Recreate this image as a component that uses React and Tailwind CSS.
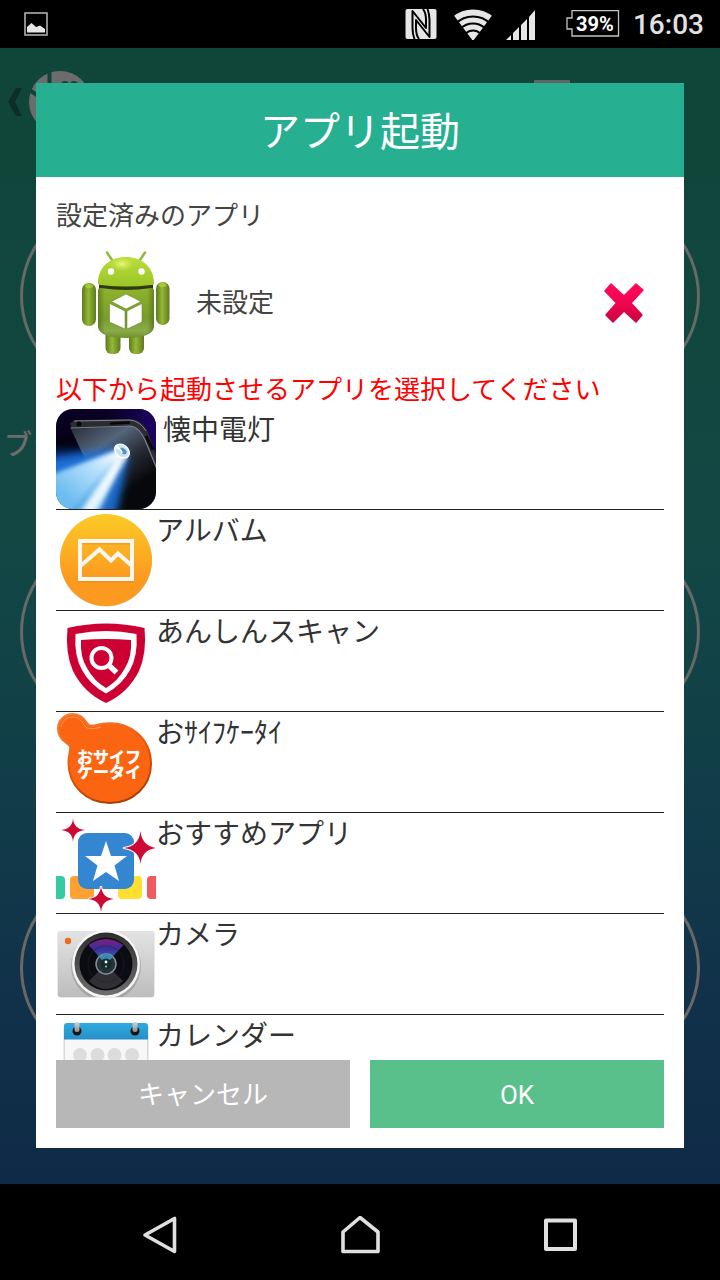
import React from "react";

function FlashlightIcon() {
  return (
    <svg viewBox="0 0 100 100" className="w-[100px] h-[100px] shrink-0">
      <defs>
        <clipPath id="flClip">
          <rect width="100" height="100" rx="17" />
        </clipPath>
        <linearGradient id="flBg" x1="0" y1="0" x2="0" y2="1">
          <stop offset="0" stopColor="#0a0124" />
          <stop offset="0.35" stopColor="#040214" />
          <stop offset="0.55" stopColor="#0b3d9c" />
          <stop offset="1" stopColor="#2a86d8" />
        </linearGradient>
        <linearGradient id="flTop" x1="0" y1="0" x2="1" y2="0">
          <stop offset="0.5" stopColor="#180060" stopOpacity="0" />
          <stop offset="1" stopColor="#1d0566" />
        </linearGradient>
        <linearGradient id="flPhone" x1="0.1" y1="0" x2="0.8" y2="1">
          <stop offset="0" stopColor="#2a313b" />
          <stop offset="0.3" stopColor="#56657a" />
          <stop offset="0.55" stopColor="#262b34" />
          <stop offset="0.8" stopColor="#07080b" />
        </linearGradient>
        <linearGradient id="flBeam" gradientUnits="userSpaceOnUse" x1="66" y1="44" x2="18" y2="96">
          <stop offset="0" stopColor="#ffffff" />
          <stop offset="0.4" stopColor="#b9e2fb" />
          <stop offset="1" stopColor="#6cbcf0" />
        </linearGradient>
        <filter id="flSoft" x="-20%" y="-20%" width="140%" height="140%">
          <feGaussianBlur stdDeviation="4" />
        </filter>
        <filter id="flSofter" x="-20%" y="-20%" width="140%" height="140%">
          <feGaussianBlur stdDeviation="2" />
        </filter>
      </defs>
      <g clipPath="url(#flClip)">
        <rect width="100" height="100" fill="url(#flBg)" />
        <rect width="100" height="40" fill="url(#flTop)" />
        <path d="M14 18 L78 15 Q86 16 90 27 L100 50 V100 H50 L28 48 Z" fill="url(#flPhone)" />
        <path d="M14 14 L20 11 L76 10 Q87 12 92 23 L102 52 V64 L88 30 Q84 19 77 17 L16 20 Z" fill="#2b2c31" />
        <path d="M15 19 L75 17 Q84 19 89 31 L101 60" fill="none" stroke="#7b8088" strokeWidth="1.200" />
        <path d="M18 12 L74 11 Q84 12 90 22" fill="none" stroke="#85868c" strokeWidth="1" />
        <path d="M55 14.500 L73 13.500" stroke="#07070a" strokeWidth="2.500" strokeLinecap="round" />
        <circle cx="23" cy="15" r="2.500" fill="#08080a" />
        <path d="M90 27 L97 41" stroke="#0a0a0d" strokeWidth="3" />
        <path d="M64 38 L-6 50 V106 H60 L72 48 Z" fill="#1c70d6" filter="url(#flSoft)" />
        <path d="M64 40 L-6 66 V106 H44 L71 47 Z" fill="url(#flBeam)" filter="url(#flSofter)" />
        <path d="M66 48 L42 104 H54 L71 49 Z" fill="#1a5fb8" opacity="0.5" filter="url(#flSofter)" />
        <path d="M66 45 L24 104 H38 L70 48 Z" fill="#ffffff" opacity="0.8" filter="url(#flSofter)" />
        <path d="M62 46 L14 104 H20 Z" fill="#4b9be0" opacity="0.6" filter="url(#flSofter)" />
        <ellipse cx="66" cy="42" rx="8" ry="6" transform="rotate(38 66 42)" fill="#c9e2f2" stroke="#ffffff" strokeWidth="1.500" />
        <ellipse cx="67" cy="42" rx="4" ry="2.500" transform="rotate(38 67 42)" fill="#5391bf" />
        <path d="M60 38 Q64 39 66 44" fill="none" stroke="#ffffff" strokeWidth="2" />
      </g>
    </svg>
  );
}

function AlbumIcon() {
  return (
    <svg viewBox="0 0 100 100" className="w-[100px] h-[100px] shrink-0">
      <defs>
        <linearGradient id="alBg" x1="0" y1="0" x2="0" y2="1">
          <stop offset="0" stopColor="#fccb27" />
          <stop offset="0.7" stopColor="#fc9a20" />
          <stop offset="1" stopColor="#fc9a20" />
        </linearGradient>
      </defs>
      <circle cx="50" cy="50.500" r="46" fill="#d9c9a8" />
      <circle cx="50" cy="50" r="46" fill="url(#alBg)" />
      <g fill="none" stroke="#d97f14" strokeOpacity="0.4" strokeWidth="4" transform="translate(0 1)">
        <rect x="24" y="31.500" width="52" height="38" />
      </g>
      <g fill="none" stroke="#fbf8f4" strokeWidth="4">
        <rect x="24" y="31" width="52" height="38" />
        <path d="M25 55.500 L43.500 39.500 L55 50.500 L62 43.500 L75 55" />
      </g>
    </svg>
  );
}

function ShieldIcon() {
  return (
    <svg viewBox="0 0 100 100" className="w-[100px] h-[100px] shrink-0">
      <path d="M11.500 17 Q50 8 88.500 17 Q91 42 83 60 Q72 82 50 92 Q28 82 17 60 Q9 42 11.500 17 Z" fill="#cc0033" />
      <path d="M19.500 23 Q50 17 80.500 23 Q82 45 74 59 Q66 74 50 82.500 Q34 74 26 59 Q18 45 19.500 23 Z" fill="#fff" />
      <path d="M25 29 Q50 27 75 29 Q76 46 69 57 Q62 70 50 77 Q38 70 31 57 Q24 46 25 29 Z" fill="#cc0033" />
      <circle cx="45.500" cy="47" r="10" fill="none" stroke="#fff" strokeWidth="4" />
      <path d="M52 53.500 L60.500 61.500" stroke="#fff" strokeWidth="5.500" />
    </svg>
  );
}

function WalletIcon() {
  return (
    <svg viewBox="0 0 100 100" className="w-[100px] h-[100px] shrink-0">
      <defs>
        <linearGradient id="waEdge" x1="0.2" y1="0" x2="0.6" y2="1">
          <stop offset="0" stopColor="#f58037" />
          <stop offset="0.5" stopColor="#e85a0c" />
          <stop offset="1" stopColor="#a83f08" />
        </linearGradient>
      </defs>
      <path
        d="M16.500 2 C24 2 28 6 31 11 C33 15 38 14 45 12 C74 7 95 27 95 52 C95 74 77 91 54 91 C31 91 12 74 12.500 50 C12.500 44 15 37 14 34 C12 31 2 28 2 16 C2 8 9 2 16.500 2 Z"
        fill="#fb6410"
        stroke="url(#waEdge)"
        strokeWidth="2"
      />
      <path d="M5 15 C6 8 11 5 17 5 C23 5 26 9 28 13 C31 18 37 17 45 15" fill="none" stroke="#ff9a58" strokeWidth="1" />
      <text fill="#fff" fontSize="16" fontWeight="900" fontFamily="'Noto Sans CJK JP', sans-serif">
        <tspan x="21" y="51">おサイフ</tspan>
        <tspan x="21" y="66">ケータイ</tspan>
      </text>
    </svg>
  );
}

function RecommendIcon() {
  return (
    <svg viewBox="0 0 100 100" className="w-[100px] h-[100px] shrink-0">
      <rect x="-15" y="63" width="24" height="23" rx="4" fill="#34cba2" />
      <rect x="14" y="63" width="24" height="23" rx="4" fill="#ffa033" />
      <rect x="62" y="63" width="24" height="23" rx="4" fill="#ffe02e" />
      <rect x="91" y="63" width="24" height="23" rx="4" fill="#f15b5f" />
      <rect x="22" y="20" width="56" height="56" rx="9" fill="#3486d1" />
      <path d="M50 28 L55 43 L71 43 L58.500 52.500 L63 68 L50 59 L37 68 L41.500 52.500 L29 43 L45 43 Z" fill="#fff" />
      <g fill="#cc0a33" stroke="#fff" strokeWidth="2" paintOrder="stroke">
        <path d="M17 5 Q17.500 16 29 17 Q17.500 18 17 29 Q16.500 18 5 17 Q16.500 16 17 5 Z" />
        <path d="M84.500 18 Q86 33.500 101 35 Q86 36.500 84.500 51 Q83 36.500 67 35 Q83 33.500 84.500 18 Z" />
        <path d="M45 73 Q46 85 58 86 Q46 87 45 99 Q44 87 32 86 Q44 85 45 73 Z" />
      </g>
    </svg>
  );
}

function CameraIcon() {
  return (
    <svg viewBox="0 0 100 100" className="w-[100px] h-[100px] shrink-0">
      <defs>
        <linearGradient id="caBody" x1="0" y1="0" x2="0" y2="1">
          <stop offset="0" stopColor="#e3e3e3" />
          <stop offset="1" stopColor="#bdbdbd" />
        </linearGradient>
        <linearGradient id="caGlow" x1="0" y1="0" x2="0" y2="1">
          <stop offset="0" stopColor="#7d1f7e" />
          <stop offset="0.4" stopColor="#3a2f9c" />
          <stop offset="1" stopColor="#2f86b8" />
        </linearGradient>
        <linearGradient id="caRing" x1="0" y1="0" x2="0" y2="1">
          <stop offset="0" stopColor="#2d2d2d" />
          <stop offset="1" stopColor="#6f6f6f" />
        </linearGradient>
        <clipPath id="caClip">
          <rect x="2" y="16" width="96" height="67" rx="3" />
        </clipPath>
      </defs>
      <rect x="1.500" y="17" width="97" height="66.500" rx="3" fill="#d5d5d5" />
      <rect x="2" y="17" width="96" height="66" rx="3" fill="url(#caBody)" />
      <g clipPath="url(#caClip)">
        <circle cx="50" cy="52" r="35" fill="#8b8b8b" opacity="0.5" />
        <circle cx="50" cy="50" r="34" fill="#f6f6f6" />
      </g>
      <circle cx="50" cy="50" r="31.500" fill="url(#caRing)" />
      <circle cx="50" cy="50" r="26.500" fill="#0b0b12" />
      <path d="M50 50 L32.500 31 Q50 19 67.500 31 Z" fill="url(#caGlow)" />
      <path d="M50 50 L33 67 Q50 83 67 67 Z" fill="#303034" />
      <circle cx="50" cy="50" r="18" fill="none" stroke="#22252b" strokeWidth="1" opacity="0.6" />
      <circle cx="50" cy="50" r="10" fill="#283236" stroke="#7e9494" strokeWidth="1.500" />
      <path d="M43 43 Q50 37 57 43 L50 50 Z" fill="#368cb8" />
      <circle cx="50" cy="50" r="5.500" fill="#142d2c" />
      <circle cx="50" cy="48" r="1.400" fill="#fff" />
      <circle cx="50" cy="52.500" r="1" fill="#9fd0b0" />
      <circle cx="12" cy="27" r="3.200" fill="#ea6c1d" />
    </svg>
  );
}

function CalendarIcon() {
  return (
    <svg viewBox="0 0 100 100" className="w-[100px] h-[100px] shrink-0">
      <defs>
        <linearGradient id="clTop" x1="0" y1="0" x2="0" y2="1">
          <stop offset="0" stopColor="#2fa9e2" />
          <stop offset="1" stopColor="#2790c6" />
        </linearGradient>
        <linearGradient id="clRing" x1="0" y1="0" x2="0" y2="1">
          <stop offset="0" stopColor="#d5d5d5" />
          <stop offset="1" stopColor="#8e8e8e" />
        </linearGradient>
      </defs>
      <rect x="7.500" y="9" width="85" height="84" rx="3" fill="#d8d8d8" />
      <rect x="9" y="9" width="82" height="82" rx="3" fill="#f7f7f7" />
      <path d="M8 24.500 V11 Q8 8 11 8 H89 Q92 8 92 11 V24.500 Z" fill="url(#clTop)" />
      <circle cx="21" cy="16" r="4.500" fill="#161616" />
      <circle cx="79" cy="16" r="4.500" fill="#161616" />
      <rect x="18.500" y="7" width="5" height="10" rx="2" fill="url(#clRing)" />
      <rect x="76.500" y="7" width="5" height="10" rx="2" fill="url(#clRing)" />
      <g fill="#dcdcdc">
        <circle cx="24" cy="40" r="7" />
        <circle cx="41.500" cy="40" r="7" />
        <circle cx="58.500" cy="40" r="7" />
        <circle cx="76" cy="40" r="7" />
      </g>
    </svg>
  );
}

function AndroidIcon() {
  return (
    <svg viewBox="0 0 120 120" className="w-[120px] h-[120px] shrink-0">
      <defs>
        <linearGradient id="anHead" x1="0" y1="0" x2="0" y2="1">
          <stop offset="0" stopColor="#b9dd3c" />
          <stop offset="1" stopColor="#9ac626" />
        </linearGradient>
        <linearGradient id="anBody" x1="0" y1="0" x2="0" y2="1">
          <stop offset="0" stopColor="#8fb32c" />
          <stop offset="0.6" stopColor="#799d2b" />
          <stop offset="0.85" stopColor="#8bab4a" />
          <stop offset="1" stopColor="#6f9128" />
        </linearGradient>
        <linearGradient id="anLimb" x1="0" y1="0" x2="1" y2="0">
          <stop offset="0" stopColor="#5e7a1c" />
          <stop offset="0.45" stopColor="#94b836" />
          <stop offset="1" stopColor="#5e7a1c" />
        </linearGradient>
        <linearGradient id="anShade" x1="0" y1="0" x2="1" y2="0">
          <stop offset="0" stopColor="#3e5410" stopOpacity="0.5" />
          <stop offset="0.12" stopColor="#3e5410" stopOpacity="0" />
          <stop offset="0.88" stopColor="#3e5410" stopOpacity="0" />
          <stop offset="1" stopColor="#3e5410" stopOpacity="0.5" />
        </linearGradient>
        <radialGradient id="anShine">
          <stop offset="0" stopColor="#eaf77c" />
          <stop offset="1" stopColor="#d7ee55" stopOpacity="0" />
        </radialGradient>
      </defs>
      <rect x="39.500" y="84" width="15" height="27" rx="6" fill="url(#anLimb)" />
      <rect x="63" y="84" width="15" height="27" rx="6" fill="url(#anLimb)" />
      <rect x="16" y="40" width="14" height="43" rx="6.500" fill="url(#anLimb)" />
      <rect x="90" y="39" width="13.500" height="43" rx="6.500" fill="url(#anLimb)" />
      <ellipse cx="23" cy="43" rx="4" ry="2" fill="#b4da3f" opacity="0.6" />
      <ellipse cx="96.500" cy="42" rx="4" ry="2" fill="#b4da3f" opacity="0.6" />
      <path d="M41 9.500 L46 17 M79 9.500 L74 17" stroke="#93b944" strokeWidth="2.600" strokeLinecap="round" />
      <path d="M33 40 H87 V47 Q60 52 33 47 Z" fill="#2e3b12" />
      <path d="M32 48 Q32 45 35 45 Q60 49 85 45 Q88 45 88 48 V84 Q86 95 60 95 Q34 95 32 84 Z" fill="url(#anBody)" />
      <path d="M32 48 Q32 45 35 45 Q60 49 85 45 Q88 45 88 48 V84 Q86 95 60 95 Q34 95 32 84 Z" fill="url(#anShade)" />
      <path d="M32 40 C32 24 44 14 60 14 C76 14 88 24 88 40 Q88 42 85 42 Q60 45 35 42 Q32 42 32 40 Z" fill="url(#anHead)" />
      <ellipse cx="56" cy="21" rx="12" ry="7" fill="url(#anShine)" />
      <circle cx="45" cy="28.500" r="3.200" fill="#fff" />
      <circle cx="75.500" cy="28.500" r="3.200" fill="#fff" />
      <g fill="#fff" stroke="#5b7820" strokeWidth="0.500">
        <path d="M45.500 58.500 L60 51 L75 58.500 L60 66 Z" />
        <path d="M43.500 60.500 L59 68 V86 L43.500 79 Z" />
        <path d="M76 60.500 L61 68 V86 L76 79 Z" />
      </g>
    </svg>
  );
}

function StatusBar() {
  return (
    <div className="h-12 shrink-0 bg-black flex items-center px-4 text-[#e2e2e2]">
      <svg viewBox="0 0 24 24" className="w-6 h-6 ml-2">
        <rect x="1" y="1" width="22" height="22" fill="none" stroke="#b9b9b9" strokeWidth="1.500" />
        <path d="M3 20.500 V15 L7.500 11 L12 15 L16 13.500 L21 17 V20.500 Z" fill="#e6e6e6" />
      </svg>
      <svg viewBox="0 0 32 32" className="w-8 h-8 ml-auto">
        <rect x="0.500" y="1" width="31" height="30" rx="2" fill="#e6e6e6" />
        <g fill="none" stroke="#000" strokeWidth="2" strokeLinejoin="round">
          <path d="M9.500 31 Q7.500 26 7.500 20 V3 L21 20 V12 Q21 5 18 1" />
          <path d="M22.500 1 Q24.500 6 24.500 12 V29 L11 12 V20 Q11 27 14 31" />
        </g>
      </svg>
      <svg viewBox="0 0 40 32" className="w-10 h-8 ml-4">
        <clipPath id="wifiClip">
          <path d="M20 33 L-1 5 L6 0 H34 L41 5 Z" />
        </clipPath>
        <g clipPath="url(#wifiClip)" fill="none" stroke="#e6e6e6">
          <circle cx="20" cy="33" r="28.500" strokeWidth="6" />
          <circle cx="20" cy="33" r="21" strokeWidth="5" />
          <circle cx="20" cy="33" r="14" strokeWidth="5" />
          <circle cx="20" cy="33" r="5" strokeWidth="9" />
        </g>
      </svg>
      <svg viewBox="0 0 32 32" className="w-8 h-8 ml-3" fill="#e6e6e6">
        <path d="M1 32 L6 27 V32 Z M8 32 V25 L14 19 V32 Z M16 32 V17 L22 11 V32 Z M24 32 V9 L30 2 V32 Z" />
      </svg>
      <div className="relative ml-7 w-14 h-7">
        <svg viewBox="0 0 56 28" className="w-14 h-7">
          <path d="M7 0.700 H53.500 V26 H7 V19 H2 V8 H7 Z" fill="none" stroke="#c4c4c4" strokeWidth="1.300" />
        </svg>
        <span className="absolute inset-0 pl-1 flex items-center justify-center text-[20px] leading-7 font-bold text-white">39%</span>
      </div>
      <span className="ml-3 pt-0.5 text-[28px] leading-11 font-medium">16:03</span>
    </div>
  );
}

// dimmed screen that stays behind the dialog
function HomeScreen() {
  return (
    <div className="absolute inset-0 overflow-hidden flex flex-col bg-[#10463a]" aria-hidden="true">
      <div className="h-32 shrink-0 flex items-center pb-5 px-2">
        <svg viewBox="0 0 16 28" className="w-4 h-7">
          <path d="M8 0 H14 L7 14 L14 28 H8 L0 14 Z" fill="#0b2f27" />
        </svg>
        <svg viewBox="0 0 64 64" className="w-16 h-16 ml-1">
          <circle cx="32" cy="32" r="31" fill="#6c6c6c" />
          <path d="M21.500 0 V14 L10 26 L0 19" fill="none" stroke="#10463a" strokeWidth="4" />
          <circle cx="37" cy="15" r="4" fill="#10463a" />
          <circle cx="46" cy="15" r="4" fill="#10463a" />
        </svg>
        <div className="ml-auto mr-[142px] w-9 h-11 bg-[#606363]" />
      </div>
      <div className="grow bg-[linear-gradient(#10463a,#124744_35%,#114147_52%,#11314a_80%,#0f2946)] px-5 pt-6 grid grid-cols-2 content-start">
        {[0, 1, 2].map((row) => (
          <React.Fragment key={row}>
            <div className="h-[336px]">
              <div className="w-48 h-48 rounded-full border-3 border-[#6a6767]" />
              {row === 0 && <p className="-ml-4 mt-8 text-[28px] leading-11 font-medium text-[#6c6c6c]">ブラ</p>}
            </div>
            <div className="h-[336px] flex justify-end">
              <div className="w-48 h-48 rounded-full border-3 border-[#6a6767]" />
            </div>
          </React.Fragment>
        ))}
      </div>
    </div>
  );
}

const apps = [
  { name: " 懐中電灯", Icon: FlashlightIcon },
  { name: "アルバム", Icon: AlbumIcon },
  { name: "あんしんスキャン", Icon: ShieldIcon },
  { name: "おｻｲﾌｹｰﾀｲ", Icon: WalletIcon },
  { name: "おすすめアプリ", Icon: RecommendIcon },
  { name: "カメラ", Icon: CameraIcon },
  { name: "カレンダー", Icon: CalendarIcon },
];

function AppDialog() {
  return (
    <div role="dialog" aria-labelledby="dialog-title" className="relative grow min-h-0 flex flex-col bg-white">
      <h1 id="dialog-title" className="h-[94px] shrink-0 flex items-center justify-center pt-1.5 bg-[#26af91] text-white text-[40px] leading-[60px]">
        アプリ起動
      </h1>
      <div className="grow min-h-0 flex flex-col p-5 text-[26px] leading-[38px]">
        <h2 className="text-[#444]">設定済みのアプリ</h2>
        <div className="h-[136px] shrink-0 flex items-center gap-2.5 px-2.5 text-[#444]">
          <AndroidIcon />
          <span>未設定</span>
          <button type="button" aria-label="削除" className="ml-auto mr-2">
            <svg viewBox="0 0 44 44" className="w-11 h-11">
              <defs>
                <linearGradient id="xFill" x1="0" y1="0" x2="0" y2="1">
                  <stop offset="0" stopColor="#ff0a5c" />
                  <stop offset="0.5" stopColor="#f00452" />
                  <stop offset="1" stopColor="#c8053f" />
                </linearGradient>
              </defs>
              <path
                d="M9 3 L22 15 L34 3 L41 9 L29 22 L40 34 L34 41 L22 30 L11 41 L4 34 L14.500 22 L3 10 Z"
                fill="url(#xFill)"
                stroke="url(#xFill)"
                strokeWidth="1.500"
                strokeLinejoin="round"
              />
            </svg>
          </button>
        </div>
        <p className="text-[#ff0000]">以下から起動させるアプリを選択してください</p>
        <ul className="grow min-h-0 overflow-hidden">
          {apps.map(({ name, Icon }) => (
            <li key={name} className="border-b border-[#222]">
              <button type="button" className="w-full flex items-start text-left text-[28px] leading-11 text-[#333] whitespace-pre">
                <Icon />
                <span>{name}</span>
              </button>
            </li>
          ))}
        </ul>
        <div className="shrink-0 grid grid-cols-2 gap-5 text-white">
          <button type="button" className="h-[68px] pt-0.5 bg-[#b7b7b7]">キャンセル</button>
          <button type="button" className="h-[68px] pt-0.5 bg-[#59bf8b]">OK</button>
        </div>
      </div>
    </div>
  );
}

function NavBar() {
  return (
    <div className="h-24 shrink-0 bg-black flex items-center justify-center pt-2">
      <button type="button" aria-label="戻る" className="w-[200px] flex justify-center">
        <svg viewBox="0 0 40 40" className="w-10 h-10">
          <path d="M34.500 2.500 V35.500 L5 19 Z" fill="none" stroke="#e0e0e0" strokeWidth="3.600" strokeLinejoin="round" />
        </svg>
      </button>
      <button type="button" aria-label="ホーム" className="w-[200px] flex justify-center">
        <svg viewBox="0 0 40 40" className="w-10 h-10">
          <path d="M3 35.500 V16 L20 1.500 L38 16 V35.500 Z" fill="none" stroke="#e0e0e0" strokeWidth="3.600" strokeLinejoin="round" />
        </svg>
      </button>
      <button type="button" aria-label="履歴" className="w-[200px] flex justify-center">
        <svg viewBox="0 0 40 40" className="w-10 h-10">
          <rect x="6" y="4.500" width="29" height="28.500" fill="none" stroke="#e0e0e0" strokeWidth="4" strokeLinejoin="round" />
        </svg>
      </button>
    </div>
  );
}

function App() {
  return (
    <div className="h-screen flex flex-col bg-black font-[Roboto,'Noto_Sans_CJK_JP',sans-serif]">
      <StatusBar />
      <main className="relative grow min-h-0 flex flex-col px-9 pt-[35px] pb-9">
        <HomeScreen />
        <AppDialog />
      </main>
      <NavBar />
    </div>
  );
}

export default App;
